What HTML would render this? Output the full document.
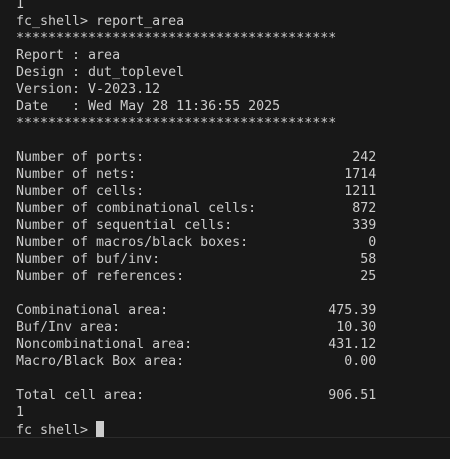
<!DOCTYPE html>
<html><head><style>
html,body{margin:0;padding:0;background:#181818;width:450px;height:459px;overflow:hidden}
pre{position:absolute;left:16px;top:-4.5px;margin:0;font-family:"DejaVu Sans Mono","Liberation Mono",monospace;font-size:13.3px;line-height:17px;color:#cccccc}
.cur{display:inline-block;width:8px;height:16px;background:#cccccc;vertical-align:-3px}
.sep{position:absolute;left:0;top:437px;width:450px;height:1px;background:#2b2b2b}
</style></head><body>
<pre>1
fc_shell&gt; report_area
****************************************
Report : area
Design : dut_toplevel
Version: V-2023.12
Date   : Wed May 28 11:36:55 2025
****************************************

Number of ports:                          242
Number of nets:                          1714
Number of cells:                         1211
Number of combinational cells:            872
Number of sequential cells:               339
Number of macros/black boxes:               0
Number of buf/inv:                         58
Number of references:                      25

Combinational area:                    475.39
Buf/Inv area:                           10.30
Noncombinational area:                 431.12
Macro/Black Box area:                    0.00

Total cell area:                       906.51
1
fc shell&gt; <span class="cur"></span></pre>
<div class="sep"></div>
</body></html>
